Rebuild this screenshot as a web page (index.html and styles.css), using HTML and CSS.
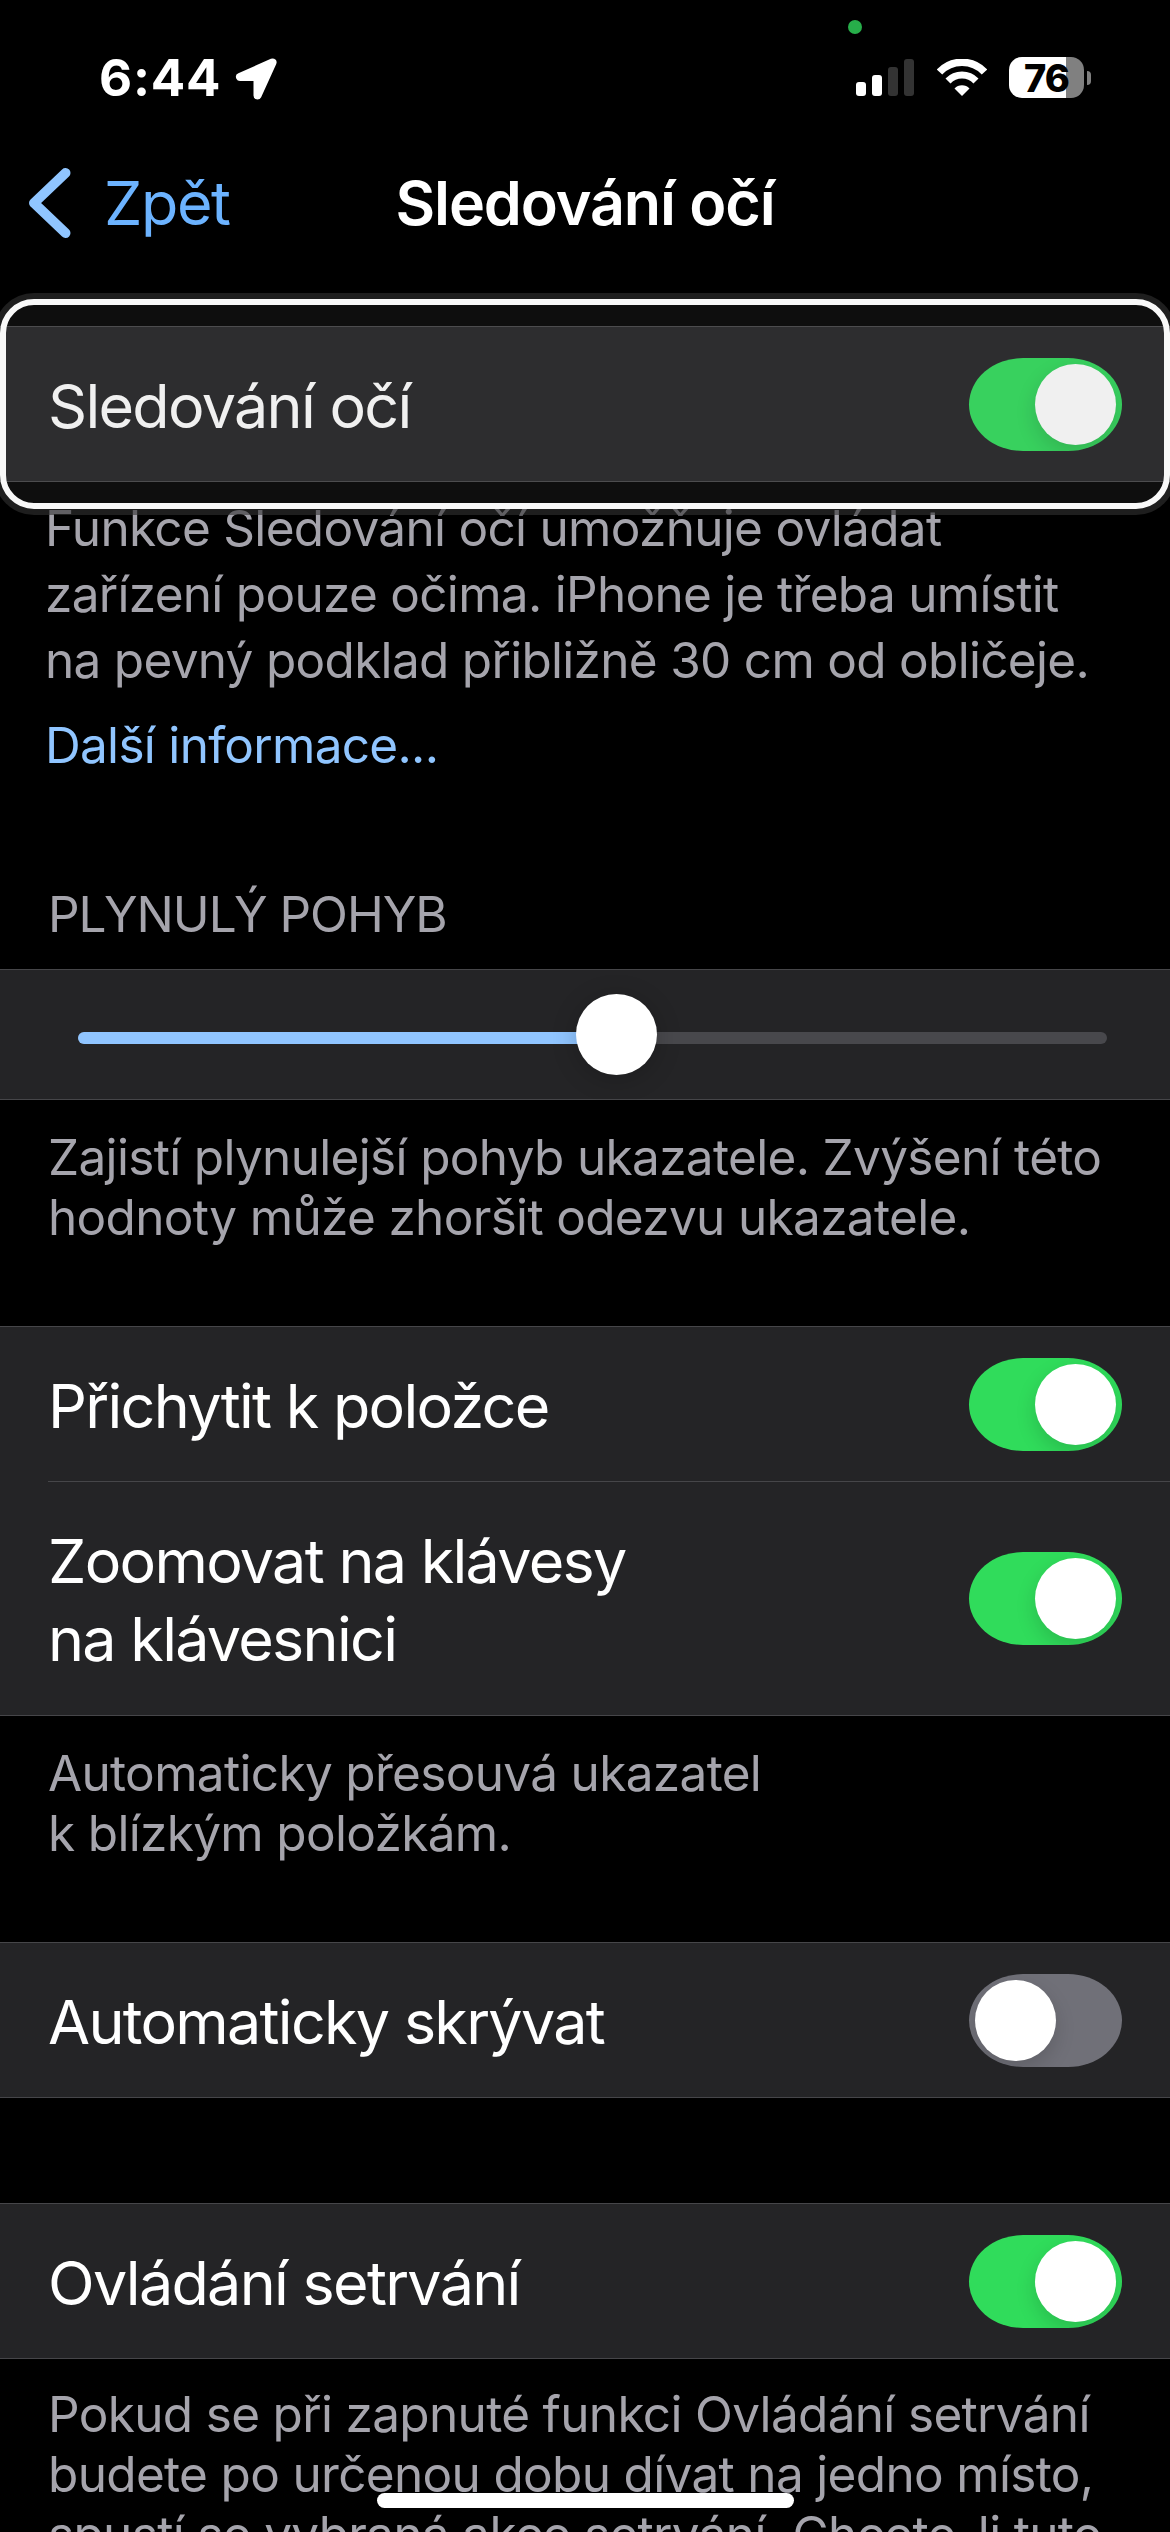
FILE: index.html
```
<!DOCTYPE html>
<html lang="cs">
<head>
    <meta charset="UTF-8">
    <meta name="viewport" content="width=device-width, initial-scale=1.0">
    <title>Sledování očí</title>
    <link rel="stylesheet" href="styles.css">
</head>
<body>
    <div class="status-bar">
        <span class="privacy-dot"></span>
        <div class="status-left">
            <span class="time">6:44</span>
            <svg class="location-icon" viewBox="0 0 42 42" width="42" height="42">
                <path d="M37.5 4.5 L5 19 H22.5 V37.5 Z" fill="#fff" stroke="#fff" stroke-width="8" stroke-linejoin="round"/>
            </svg>
        </div>
        <div class="status-right">
            <svg class="signal-icon" viewBox="0 0 58 37" width="58" height="37">
                <rect x="0" y="23" width="10" height="14" rx="3" fill="#fff"/>
                <rect x="16" y="16" width="10" height="21" rx="3" fill="#fff"/>
                <rect x="32" y="8" width="10" height="29" rx="3" fill="#333"/>
                <rect x="48" y="0" width="10" height="37" rx="3" fill="#333"/>
            </svg>
            <svg class="wifi-icon" viewBox="0 0 50 37" width="50" height="37">
                <path d="M2.5 13 A31 31 0 0 1 47.5 13" fill="none" stroke="#fff" stroke-width="7.5"/>
                <path d="M11 22 A19.5 19.5 0 0 1 39 22" fill="none" stroke="#fff" stroke-width="7"/>
                <path d="M25 37 L17.5 29.5 A10.500 10.500 0 0 1 32.5 29.5 Z" fill="#fff"/>
            </svg>
            <div class="battery">
                <div class="battery-body">76</div>
                <div class="battery-cap"></div>
            </div>
        </div>
    </div>

    <header class="nav-bar">
        <a class="back">
            <svg viewBox="0 0 42 70" width="42" height="70">
                <path d="M36.5 5 L5 35 L36.5 65" fill="none" stroke="#90c5ff" stroke-width="10" stroke-linecap="round" stroke-linejoin="round"/>
            </svg>
            <span>Zpět</span>
        </a>
        <h1>Sledování očí</h1>
    </header>

    <main>
        <section class="group focused">
            <div class="row">
                <span class="label">Sledování očí</span>
                <span class="switch on"></span>
            </div>
        </section>
        <div class="footer footer-intro">
            <p>Funkce Sledování očí umožňuje ovládat<br>zařízení pouze očima. iPhone je třeba umístit<br>na pevný podklad přibližně 30 cm od obličeje.</p>
            <a class="more">Další informace...</a>
        </div>

        <h2 class="group-title">PLYNULÝ POHYB</h2>
        <section class="group slider-group">
            <div class="slider">
                <div class="slider-fill"></div>
                <div class="slider-knob"></div>
            </div>
        </section>
        <p class="footer">Zajistí plynulejší pohyb ukazatele. Zvýšení této<br>hodnoty může zhoršit odezvu ukazatele.</p>

        <section class="group">
            <div class="row">
                <span class="label">Přichytit k položce</span>
                <span class="switch on"></span>
            </div>
            <div class="row row-tall">
                <span class="label">Zoomovat na klávesy<br>na klávesnici</span>
                <span class="switch on"></span>
            </div>
        </section>
        <p class="footer">Automaticky přesouvá ukazatel<br>k blízkým položkám.</p>

        <section class="group">
            <div class="row">
                <span class="label">Automaticky skrývat</span>
                <span class="switch"></span>
            </div>
        </section>

        <section class="group group-spaced">
            <div class="row">
                <span class="label">Ovládání setrvání</span>
                <span class="switch on"></span>
            </div>
        </section>
        <p class="footer footer-last">Pokud se při zapnuté funkci Ovládání setrvání<br>budete po určenou dobu dívat na jedno místo,<br>spustí se vybraná akce setrvání. Chcete-li tuto</p>
    </main>

    <div class="home-indicator"></div>
</body>
</html>
```
FILE: styles.css
```
* {
    box-sizing: border-box;
}
body {
    position: relative;
    width: 1170px;
    height: 2532px;
    margin: 0;
    overflow: hidden;
    background-color: #000;
    color: #fff;
    font-family: Inter, 'Liberation Sans', sans-serif;
}
h1, h2, p {
    margin: 0;
    font-weight: 400;
}

/* status bar */
.status-bar {
    position: relative;
    display: flex;
    justify-content: space-between;
    height: 138px;
    padding: 57px 79px 0 99px;
}
.privacy-dot {
    position: absolute;
    left: 848px;
    top: 20px;
    width: 14px;
    height: 14px;
    border-radius: 50%;
    background-color: #27ae4a;
}
.status-left {
    display: flex;
    align-items: flex-start;
    gap: 12px;
}
.time {
    width: 124px;
    font-size: 51px;
    font-weight: 700;
    line-height: 42px;
    letter-spacing: 0.8px;
}
.location-icon {
    margin-top: 1px;
}
.status-right {
    display: flex;
    align-items: flex-start;
}
.signal-icon {
    margin: 2px 23px 0 0;
}
.wifi-icon {
    margin: 2px 22px 0 0;
}
.battery {
    display: flex;
    align-items: center;
    gap: 3px;
}
.battery-body {
    width: 75px;
    height: 41px;
    border-radius: 13px;
    background: linear-gradient(90deg, #fff 76%, #808080 76%);
    color: #000;
    font-size: 38px;
    font-weight: 800;
    line-height: 42px;
    text-align: center;
    letter-spacing: -1px;
}
.battery-cap {
    width: 4px;
    height: 14px;
    border-radius: 0 4px 4px 0;
    background-color: #808080;
}

/* navigation */
.nav-bar {
    display: grid;
    grid-template-columns: 1fr auto 1fr;
    align-items: center;
    height: 130px;
    padding: 0 29px;
    font-size: 61px;
    letter-spacing: -1.4px;
}
.back {
    display: flex;
    align-items: center;
    gap: 33px;
    color: #6cb3ff;
}
.nav-bar h1 {
    font-size: 61px;
    font-weight: 600;
    letter-spacing: -1.1px;
}

/* grouped lists */
.group {
    position: relative;
    margin-top: 79px;
    border-top: 1px solid #464649;
    border-bottom: 1px solid #464649;
    background-color: #242426;
}
.row {
    display: flex;
    align-items: center;
    justify-content: space-between;
    height: 154px;
    margin-left: 48px;
    padding-right: 48px;
}
.row-tall {
    height: 234px;
    border-top: 1px solid #464649;
}
.label {
    padding-top: 3px;
    font-size: 61px;
    line-height: 78px;
    letter-spacing: -1.7px;
}
.group-spaced {
    margin-top: 105px;
}
.group-title {
    margin: 106px 0 25px;
    padding-left: 48px;
    color: #a5a4ac;
    font-size: 49.5px;
    line-height: 60px;
    letter-spacing: -1px;
}
.footer {
    margin-top: 27px;
    padding-left: 48px;
    color: #a5a4ac;
    font-size: 49.5px;
    line-height: 60px;
    letter-spacing: -0.67px;
    white-space: nowrap;
}
.footer-last {
    margin-top: 25px;
}
.footer-intro {
    margin-top: 13px;
    padding-left: 45px;
    line-height: 66px;
    letter-spacing: -0.7px;
}
.more {
    display: block;
    margin-top: 19px;
    color: #90c5ff;
}

/* eye tracking focus frame */
.focused {
    margin-top: 58px;
}
.focused::after {
    content: '';
    position: absolute;
    inset: -28px 0;
    border: 6px solid #f8f8f8;
    border-radius: 34px;
    background-color: rgba(123, 123, 123, 0.114);
    box-shadow: 0 0 0 6px rgba(50, 50, 50, 0.6);
}

/* switch */
.switch {
    flex: none;
    width: 153px;
    height: 93px;
    padding: 6px;
    border-radius: 54px / 46.5px;
    background-color: #707078;
    overflow: hidden;
}
.switch::before {
    content: '';
    display: block;
    width: 81px;
    height: 81px;
    border-radius: 50%;
    background-color: #fff;
    box-shadow: 0 8px 20px rgba(0, 0, 0, 0.15);
}
.switch.on {
    background-color: #30dc5b;
}
.switch.on::before {
    margin-left: auto;
}

/* slider */
.slider-group {
    height: 131px;
    margin-top: 0;
    padding: 62px 63px 0 78px;
}
.slider {
    display: flex;
    align-items: center;
    height: 12px;
    border-radius: 6px;
    background-color: #48484c;
}
.slider-fill {
    width: 538px;
    height: 12px;
    border-radius: 6px 0 0 6px;
    background-color: #90c5ff;
}
.slider-knob {
    flex: none;
    width: 81px;
    height: 81px;
    margin: -7px 0 0 -40px;
    border-radius: 50%;
    background-color: #fff;
    box-shadow: 0 4px 26px rgba(0, 0, 0, 0.2);
}

.home-indicator {
    position: absolute;
    left: 377px;
    bottom: 24px;
    width: 417px;
    height: 15px;
    border-radius: 8px;
    background-color: #fff;
}
```
